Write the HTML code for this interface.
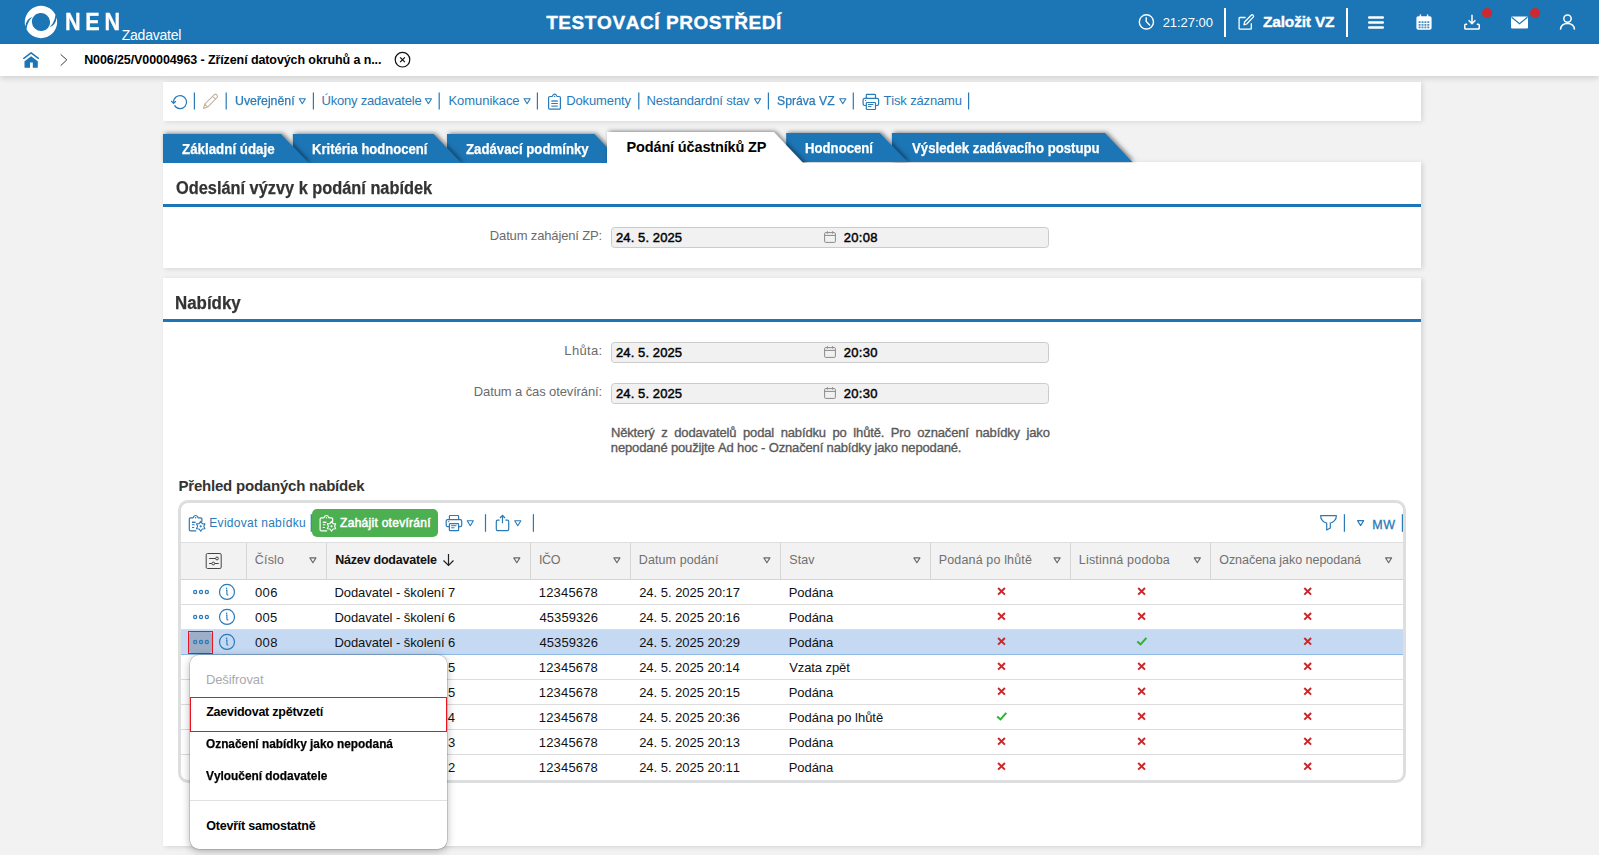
<!DOCTYPE html><html lang="cs"><head><meta charset="utf-8"><title>NEN - Zadavatel</title><style>

html,body{margin:0;padding:0}
body{font-kerning:none;width:1599px;height:855px;overflow:hidden;background:#f2f2f2;font-family:"Liberation Sans", sans-serif;position:relative}
.a{position:absolute}
.t{position:absolute;white-space:nowrap;line-height:20px;height:20px}
svg{position:absolute;overflow:visible}

</style></head><body>
<div class="a" style="left:0;top:0;width:1599px;height:44px;background:#1c75b4"></div>
<svg style="left:18px;top:0px" width="50" height="44" viewBox="18 0 50 44"><path d="M25.45 26.55A16.2 16.2 0 0 1 55.5 14.8Q54.6 24 47.6 28.6A9.3 9.3 0 1 0 33.5 16.5Q25.7 18.7 25.45 26.55Z" fill="#fff"/><path d="M25.45 26.55A16.2 16.2 0 0 1 55.5 14.8Q54.6 24 47.6 28.6A9.3 9.3 0 1 0 33.5 16.5Q25.7 18.7 25.45 26.55Z" fill="#fff" transform="rotate(180 41 22)"/></svg>
<span class="t" id="t2" style="left:64.96px;top:12.00px;font-size:23.5px;font-weight:700;color:#fff;-webkit-text-stroke:.3px #fff;transform:scaleX(0.920);transform-origin:0 0;letter-spacing:5.139px;">NEN</span>
<span class="t" id="t3" style="left:121.66px;top:25.00px;font-size:14px;font-weight:400;color:#fff;letter-spacing:-0.213px;">Zadavatel</span>
<span class="t" id="t4" style="left:546.19px;top:13.00px;font-size:19px;font-weight:700;color:#fff;letter-spacing:0.574px;-webkit-text-stroke:.35px #fff;">TESTOVACÍ PROSTŘEDÍ</span>
<svg style="left:1138px;top:13px" width="17" height="18" viewBox="0 -0.5 17 18"><circle cx="8.4" cy="8.4" r="7.1" fill="none" stroke="#fff" stroke-width="1.4"/><path d="M8.2 4.2V8L11.6 11.4" fill="none" stroke="#fff" stroke-width="1.4" stroke-linecap="round"/></svg>
<span class="t" id="t6" style="left:1162.65px;top:13.00px;font-size:13px;font-weight:400;color:#fff;letter-spacing:-0.049px;">21:27:00</span>
<div class="a" style="left:1224px;top:8px;width:2px;height:29px;background:#fff"></div>
<svg style="left:1238px;top:13px" width="17" height="18" viewBox="0 -0.6 17 18"><path d="M7.6 3.9H1.7A0.6 0.6 0 0 0 1.1 4.5V15A0.6 0.6 0 0 0 1.7 15.6H12.7A0.6 0.6 0 0 0 13.3 15V9.6" fill="none" stroke="#fff" stroke-width="1.3"/><path d="M6 11.2L6.6 8.4L13.2 1.6A1.35 1.35 0 0 1 15.2 3.5L8.7 10.4Z" fill="none" stroke="#fff" stroke-width="1.3" stroke-linejoin="round"/></svg>
<span class="t" id="t9" style="left:1263.04px;top:12.00px;font-size:15.5px;font-weight:700;color:#fff;letter-spacing:-0.187px;-webkit-text-stroke:.35px #fff;">Založit VZ</span>
<div class="a" style="left:1346px;top:8px;width:2px;height:29px;background:#fff"></div>
<svg style="left:1368px;top:15px" width="16" height="14" viewBox="0 0 16 14"><path d="M1.2 2.4H14.8M1.2 7.4H14.8M1.2 12.4H14.8" stroke="#fff" stroke-width="2.5" stroke-linecap="round"/></svg>
<svg style="left:1416px;top:14px" width="16" height="16" viewBox="0 0 16 16"><rect x="0.4" y="2.2" width="15.2" height="13.6" rx="1.8" fill="#fff"/><path d="M4.4 0.4V3.4M11.6 0.4V3.4" stroke="#fff" stroke-width="1.5"/><path d="M2.6 8.2H13.4M2.6 10.8H13.4M2.6 13.3H13.4" stroke="#1c75b4" stroke-width="1.7" stroke-dasharray="2 0.9" opacity=".8"/></svg>
<svg style="left:1464px;top:14px" width="16" height="16" viewBox="0 0 16 16"><path d="M8 0.8V9.5M4.6 6.3L8 9.7L11.4 6.3" fill="none" stroke="#fff" stroke-width="1.5"/><path d="M3.2 10.3H1.6A0.8 0.8 0 0 0 0.8 11.1V14.2A0.8 0.8 0 0 0 1.6 15H14.4A0.8 0.8 0 0 0 15.2 14.2V11.1A0.8 0.8 0 0 0 14.4 10.3H12.8" fill="none" stroke="#fff" stroke-width="1.5"/></svg>
<div class="a" style="left:1482px;top:8px;width:10px;height:10px;border-radius:5px;background:#cc2a2e"></div>
<svg style="left:1511px;top:16px" width="17" height="13" viewBox="0 -0.5 17 13"><rect x="0" y="0" width="17" height="12" rx="1.2" fill="#fff"/><path d="M0.6 0.8L8.5 7.2L16.4 0.8" fill="none" stroke="#1c75b4" stroke-width="1.2"/></svg>
<div class="a" style="left:1530px;top:8px;width:10px;height:10px;border-radius:5px;background:#cc2a2e"></div>
<svg style="left:1559px;top:14px" width="17" height="16" viewBox="-0.5 0 17 16"><circle cx="8" cy="4.6" r="3.7" fill="none" stroke="#fff" stroke-width="1.5"/><path d="M1 15.6C1.3 11 4.3 9.4 8 9.4S14.7 11 15 15.6" fill="none" stroke="#fff" stroke-width="1.5"/></svg>
<div class="a" style="left:0;top:44px;width:1599px;height:32px;background:#fff;box-shadow:0 2px 6px rgba(0,0,0,.15)"></div>
<svg style="left:23px;top:52px" width="16" height="16" viewBox="0 0 16 16"><path d="M0.8 6.3L8.1 0.8L15.4 6.3" fill="none" stroke="#1c75b4" stroke-width="1.5" stroke-linecap="round" stroke-linejoin="round"/><path d="M1.5 9.3L8.1 4.2L14.8 9.3V15.2Q14.8 15.8 14.2 15.8H9.8V10.5H7V15.8H2.1Q1.5 15.8 1.5 15.2Z" fill="#1c75b4"/></svg>
<svg style="left:60px;top:54px" width="8" height="12" viewBox="0 0 8 12"><path d="M0.7 0.4L6.8 5.9L0.7 11.6" fill="none" stroke="#3c3c4a" stroke-width="1"/></svg>
<span class="t" id="t21" style="left:84.16px;top:50.00px;font-size:12.5px;font-weight:700;color:#000;letter-spacing:-0.100px;">N006/25/V00004963 - Zřízení datových okruhů a n...</span>
<svg style="left:394px;top:51px" width="17" height="17" viewBox="-0.5 -0.7 17 17"><circle cx="8" cy="8" r="7.3" fill="none" stroke="#111" stroke-width="1.2"/><path d="M5.6 5.6L10.4 10.4M10.4 5.6L5.6 10.4" stroke="#111" stroke-width="1.2"/></svg>
<div class="a" style="left:163px;top:82px;width:1258px;height:39px;background:#fff;box-shadow:2px 1px 5px rgba(0,0,0,.11)"></div>
<svg style="left:171px;top:94px" width="16" height="15" viewBox="0 0 16 15"><path d="M2.6 8.6A6.5 6.5 0 1 1 3.5 11.4" fill="none" stroke="#2a7ab8" stroke-width="1.2"/><path d="M0.3 6.9L2.5 9.4L4.9 7.3" fill="none" stroke="#2a7ab8" stroke-width="1.3"/></svg>
<svg style="left:193px;top:92px" width="3" height="18" viewBox="-0.8 -0.5 3 18"><rect width="1.2" height="17.0" fill="#2a7ab8"/></svg>
<svg style="left:202px;top:93px" width="18" height="17" viewBox="-0.5 -0.5 18 17"><path d="M1 15L2.2 10.6L11.6 1.4A1.9 1.9 0 0 1 14.4 4.2L5.2 13.6Z M2.2 10.6L5.2 13.6 M10.2 2.8L13 5.6" fill="none" stroke="#c4b3a2" stroke-width="1.1" stroke-linejoin="round"/></svg>
<svg style="left:225px;top:92px" width="2" height="18" viewBox="-0.6 -0.5 2 18"><rect width="1.2" height="17.0" fill="#2a7ab8"/></svg>
<span class="t" id="t28" style="left:234.95px;top:91.00px;font-size:13px;font-weight:400;color:#2a7ab8;transform:scaleX(0.9482);transform-origin:0 0;-webkit-text-stroke:.25px #2a7ab8;">Uveřejnění</span>
<svg style="left:298px;top:98px" width="8" height="7" viewBox="-0.7 -0.2 8 7"><path d="M0.55 0.55H6.65L3.6 5.5Z" fill="none" stroke="#2a7ab8" stroke-width="1.1" stroke-linejoin="round"/></svg>
<svg style="left:312px;top:92px" width="3" height="18" viewBox="-0.8 -0.5 3 18"><rect width="1.2" height="17.0" fill="#2a7ab8"/></svg>
<span class="t" id="t31" style="left:321.50px;top:91.00px;font-size:13px;font-weight:400;color:#2a7ab8;letter-spacing:-0.211px;">Úkony zadavatele</span>
<svg style="left:424px;top:98px" width="9" height="7" viewBox="-0.8 -0.2 9 7"><path d="M0.55 0.55H6.65L3.6 5.5Z" fill="none" stroke="#2a7ab8" stroke-width="1.1" stroke-linejoin="round"/></svg>
<svg style="left:438px;top:92px" width="2" height="18" viewBox="-0.6 -0.5 2 18"><rect width="1.2" height="17.0" fill="#2a7ab8"/></svg>
<span class="t" id="t34" style="left:448.43px;top:91.00px;font-size:13px;font-weight:400;color:#2a7ab8;letter-spacing:-0.044px;">Komunikace</span>
<svg style="left:523px;top:98px" width="8" height="7" viewBox="-0.5 -0.2 8 7"><path d="M0.55 0.55H6.65L3.6 5.5Z" fill="none" stroke="#2a7ab8" stroke-width="1.1" stroke-linejoin="round"/></svg>
<svg style="left:536px;top:92px" width="2" height="18" viewBox="-0.8 -0.5 2 18"><rect width="1.2" height="17.0" fill="#2a7ab8"/></svg>
<svg style="left:548px;top:93px" width="13" height="17" viewBox="0 0 13 17"><path d="M4 3.5H1.8A1.2 1.2 0 0 0 0.6 4.7V15A1.2 1.2 0 0 0 1.8 16.2H11.2A1.2 1.2 0 0 0 12.4 15V4.7A1.2 1.2 0 0 0 11.2 3.5H9.3M4 3.5C5 3.5 4.4 1.1 6.65 1.1C8.9 1.1 8.3 3.5 9.3 3.5" fill="none" stroke="#2a7ab8" stroke-width="1.2"/><circle cx="6.6" cy="3.4" r="0.7" fill="#2a7ab8"/><path d="M3.3 8H9.8M3.3 13.1H9.8" stroke="#2a7ab8" stroke-width="1.4" opacity=".85"/><path d="M3.3 10.5H9.8" stroke="#2a7ab8" stroke-width="1"/></svg>
<span class="t" id="t38" style="left:566.13px;top:91.00px;font-size:13px;font-weight:400;color:#2a7ab8;letter-spacing:-0.107px;">Dokumenty</span>
<svg style="left:638px;top:92px" width="2" height="18" viewBox="-0.2 -0.5 2 18"><rect width="1.2" height="17.0" fill="#2a7ab8"/></svg>
<span class="t" id="t40" style="left:646.43px;top:91.00px;font-size:13px;font-weight:400;color:#2a7ab8;letter-spacing:-0.150px;">Nestandardní stav</span>
<svg style="left:754px;top:98px" width="8" height="7" viewBox="0 -0.2 8 7"><path d="M0.55 0.55H6.65L3.6 5.5Z" fill="none" stroke="#2a7ab8" stroke-width="1.1" stroke-linejoin="round"/></svg>
<svg style="left:767px;top:92px" width="2" height="18" viewBox="-0.8 -0.5 2 18"><rect width="1.2" height="17.0" fill="#2a7ab8"/></svg>
<span class="t" id="t43" style="left:777.45px;top:91.00px;font-size:13px;font-weight:400;color:#2a7ab8;transform:scaleX(0.9385);transform-origin:0 0;-webkit-text-stroke:.25px #2a7ab8;">Správa VZ</span>
<svg style="left:839px;top:98px" width="8" height="7" viewBox="-0.2 -0.2 8 7"><path d="M0.55 0.55H6.65L3.6 5.5Z" fill="none" stroke="#2a7ab8" stroke-width="1.1" stroke-linejoin="round"/></svg>
<svg style="left:852px;top:92px" width="2" height="18" viewBox="-0.7 -0.5 2 18"><rect width="1.2" height="17.0" fill="#2a7ab8"/></svg>
<svg style="left:862px;top:93px" width="18" height="18" viewBox="0 0 18 18"><path d="M4.3 5.4V2.1A0.8 0.8 0 0 1 5.1 1.3H12.7A0.8 0.8 0 0 1 13.5 2.1V5.4" fill="none" stroke="#2a7ab8" stroke-width="1.2"/><path d="M4.3 12.5H2.5A1.4 1.4 0 0 1 1.1 11.1V6.8A1.4 1.4 0 0 1 2.5 5.4H15.2A1.4 1.4 0 0 1 16.6 6.8V11.1A1.4 1.4 0 0 1 15.2 12.5H13.5" fill="none" stroke="#2a7ab8" stroke-width="1.2"/><rect x="4.3" y="9.5" width="9.2" height="7" rx="0.7" fill="none" stroke="#2a7ab8" stroke-width="1.2"/><path d="M6 11.5H11.4M6 13.6H9.5M3 7.5H4.2" stroke="#2a7ab8" stroke-width="1"/></svg>
<span class="t" id="t47" style="left:883.51px;top:91.00px;font-size:13px;font-weight:400;color:#2a7ab8;letter-spacing:-0.158px;">Tisk záznamu</span>
<svg style="left:968px;top:92px" width="2" height="18" viewBox="0 -0.5 2 18"><rect width="1.2" height="17.0" fill="#2a7ab8"/></svg>
<div class="a" style="left:163px;top:162px;width:1258px;height:106px;background:#fff;box-shadow:2px 1px 5px rgba(0,0,0,.13)"></div>
<svg style="left:0px;top:120px" width="1599" height="50" viewBox="0 120 1599 50"><defs><filter id="ts" x="-5%" y="-30%" width="110%" height="160%"><feDropShadow dx="1.8" dy="-0.6" stdDeviation="1.9" flood-color="#000" flood-opacity=".5"/></filter><clipPath id="tc"><rect x="0" y="120" width="1599" height="43"/></clipPath></defs><g clip-path="url(#tc)"><polygon points="891.9,133 1105,133 1132.5,162 891.9,162" fill="#1c75b4" filter="url(#ts)"/><polygon points="786.2,133 880,133 907.5,162 786.2,162" fill="#1c75b4" filter="url(#ts)"/><polygon points="447,134 594.5,134 622,163 447,163" fill="#1c75b4" filter="url(#ts)"/><polygon points="292.9,134 433.7,134 461.2,163 292.9,163" fill="#1c75b4" filter="url(#ts)"/><polygon points="163,134 281.1,134 308.6,163 163,163" fill="#1c75b4" filter="url(#ts)"/><polygon points="607,132 773.7,132 805.9,166 607,166" fill="#fff" filter="url(#ts)"/></g></svg>
<span class="t" id="t51" style="left:182.20px;top:139.00px;font-size:14px;font-weight:700;color:#fff;transform:scaleX(0.9528);transform-origin:0 0;-webkit-text-stroke:.25px #fff;">Základní údaje</span>
<span class="t" id="t52" style="left:312.12px;top:139.00px;font-size:14px;font-weight:700;color:#fff;transform:scaleX(0.9332);transform-origin:0 0;-webkit-text-stroke:.25px #fff;">Kritéria hodnocení</span>
<span class="t" id="t53" style="left:465.90px;top:139.00px;font-size:14px;font-weight:700;color:#fff;transform:scaleX(0.9441);transform-origin:0 0;-webkit-text-stroke:.25px #fff;">Zadávací podmínky</span>
<span class="t" id="t54" style="left:626.53px;top:137.00px;font-size:14.5px;font-weight:700;color:#000;letter-spacing:-0.147px;">Podání účastníků ZP</span>
<span class="t" id="t55" style="left:805.12px;top:138.00px;font-size:14px;font-weight:700;color:#fff;transform:scaleX(0.9405);transform-origin:0 0;-webkit-text-stroke:.25px #fff;">Hodnocení</span>
<span class="t" id="t56" style="left:911.71px;top:138.00px;font-size:14px;font-weight:700;color:#fff;transform:scaleX(0.9422);transform-origin:0 0;-webkit-text-stroke:.25px #fff;">Výsledek zadávacího postupu</span>
<div class="a" style="left:163px;top:204px;width:1258px;height:3px;background:#1c75b4"></div>
<span class="t" id="t58" style="left:175.83px;top:178.00px;font-size:18px;font-weight:700;color:#333;transform:scaleX(0.9080);transform-origin:0 0;-webkit-text-stroke:.25px #333;">Odeslání výzvy k podání nabídek</span>
<span class="t" id="t59" style="left:489.83px;top:226.00px;font-size:13px;font-weight:400;color:#6b6b6b;letter-spacing:-0.149px;">Datum zahájení ZP:</span>
<div class="a" style="left:611px;top:227px;width:436px;height:19px;background:#f1f1f1;border:1px solid #cbcbcb;border-radius:3.5px;box-sizing:content-box"></div>
<svg style="left:824px;top:231px" width="12" height="12" viewBox="0 0 12 12"><rect x="0.6" y="1.6" width="10.8" height="9.8" rx="1" fill="none" stroke="#8a8a8a" stroke-width="1"/><path d="M0.6 4.4H11.4M3.4 0.2V2.6M8.6 0.2V2.6" stroke="#8a8a8a" stroke-width="1"/></svg>
<span class="t" id="t62" style="left:616.05px;top:228.00px;font-size:13px;font-weight:400;color:#000;letter-spacing:0.094px;-webkit-text-stroke:.45px #000;">24. 5. 2025</span>
<span class="t" id="t63" style="left:843.75px;top:228.00px;font-size:13px;font-weight:400;color:#000;letter-spacing:0.322px;-webkit-text-stroke:.45px #000;">20:08</span>
<div class="a" style="left:163px;top:278px;width:1258px;height:568px;background:#fff;box-shadow:2px 1px 5px rgba(0,0,0,.13)"></div>
<div class="a" style="left:163px;top:319px;width:1258px;height:3px;background:#1c75b4"></div>
<span class="t" id="t66" style="left:174.67px;top:293.00px;font-size:18px;font-weight:700;color:#333;transform:scaleX(0.9386);transform-origin:0 0;-webkit-text-stroke:.25px #333;">Nabídky</span>
<span class="t" id="t67" style="left:564.33px;top:341.00px;font-size:13px;font-weight:400;color:#6b6b6b;letter-spacing:0.342px;">Lhůta:</span>
<div class="a" style="left:611px;top:342px;width:436px;height:19px;background:#f1f1f1;border:1px solid #cbcbcb;border-radius:3.5px;box-sizing:content-box"></div>
<svg style="left:824px;top:346px" width="12" height="12" viewBox="0 0 12 12"><rect x="0.6" y="1.6" width="10.8" height="9.8" rx="1" fill="none" stroke="#8a8a8a" stroke-width="1"/><path d="M0.6 4.4H11.4M3.4 0.2V2.6M8.6 0.2V2.6" stroke="#8a8a8a" stroke-width="1"/></svg>
<span class="t" id="t70" style="left:616.05px;top:343.00px;font-size:13px;font-weight:400;color:#000;letter-spacing:0.094px;-webkit-text-stroke:.45px #000;">24. 5. 2025</span>
<span class="t" id="t71" style="left:843.75px;top:343.00px;font-size:13px;font-weight:400;color:#000;letter-spacing:0.307px;-webkit-text-stroke:.45px #000;">20:30</span>
<span class="t" id="t72" style="left:473.83px;top:382.00px;font-size:13px;font-weight:400;color:#6b6b6b;letter-spacing:-0.116px;">Datum a čas otevírání:</span>
<div class="a" style="left:611px;top:383px;width:436px;height:19px;background:#f1f1f1;border:1px solid #cbcbcb;border-radius:3.5px;box-sizing:content-box"></div>
<svg style="left:824px;top:387px" width="12" height="12" viewBox="0 0 12 12"><rect x="0.6" y="1.6" width="10.8" height="9.8" rx="1" fill="none" stroke="#8a8a8a" stroke-width="1"/><path d="M0.6 4.4H11.4M3.4 0.2V2.6M8.6 0.2V2.6" stroke="#8a8a8a" stroke-width="1"/></svg>
<span class="t" id="t75" style="left:616.05px;top:384.00px;font-size:13px;font-weight:400;color:#000;letter-spacing:0.094px;-webkit-text-stroke:.45px #000;">24. 5. 2025</span>
<span class="t" id="t76" style="left:843.75px;top:384.00px;font-size:13px;font-weight:400;color:#000;letter-spacing:0.307px;-webkit-text-stroke:.45px #000;">20:30</span>
<span class="t" id="t77" style="left:610.93px;top:423.00px;font-size:13px;font-weight:400;color:#5a5a5a;-webkit-text-stroke:.35px #5a5a5a;letter-spacing:-0.150px;word-spacing:3.165px;">Některý z dodavatelů podal nabídku po lhůtě. Pro označení nabídky jako</span>
<span class="t" id="t78" style="left:610.84px;top:438.00px;font-size:13px;font-weight:400;color:#5a5a5a;-webkit-text-stroke:.35px #5a5a5a;letter-spacing:-0.150px;">nepodané použijte Ad hoc - Označení nabídky jako nepodané.</span>
<span class="t" id="t79" style="left:178.50px;top:476.00px;font-size:15px;font-weight:700;color:#333;letter-spacing:-0.213px;">Přehled podaných nabídek</span>
<div class="a" style="left:178px;top:500px;width:1222px;height:277px;border:3px solid #dcdee0;border-radius:10px;background:#fff"></div>
<svg style="left:188px;top:514px" width="18" height="18" viewBox="-0.7 -0.9 18 18"><path d="M4.1 3H1.8A1.2 1.2 0 0 0 0.6 4.2V14.8A1.2 1.2 0 0 0 1.8 16H7.1M9.7 3H12A1.2 1.2 0 0 1 13.2 4.2V6.4M4.1 3C5.1 3 4.5 0.6 6.9 0.6C9.3 0.6 8.7 3 9.7 3" fill="none" stroke="#2a7ab8" stroke-width="1.2" stroke-linecap="round"/><circle cx="6.9" cy="2.9" r="0.7" fill="#2a7ab8"/><path d="M3.3 7.4H6.9" stroke="#2a7ab8" stroke-width="1.4"/><path d="M3.3 9.9H5.9M3.3 12.6H5.5" stroke="#2a7ab8" stroke-width="1.1"/><path d="M12.0 6.5L13.6 8.7L16.2 9.0L15.1 11.4L16.2 13.8L13.6 14.1L12.0 16.3L10.5 14.1L7.8 13.8L8.9 11.4L7.8 8.9L10.4 8.7Z" fill="#fff" stroke="#2a7ab8" stroke-width="1.1" stroke-linejoin="round"/><circle cx="12" cy="11.4" r="1.1" fill="#2a7ab8"/></svg>
<span class="t" id="t82" style="left:209.32px;top:513.00px;font-size:12px;font-weight:400;color:#2a7ab8;letter-spacing:0.281px;">Evidovat nabídku</span>
<svg style="left:310px;top:514px" width="2" height="18" viewBox="-0.7 -0.2 2 18"><rect width="1.2" height="17.6" fill="#2a7ab8"/></svg>
<div class="a" style="left:312px;top:509.3px;width:126px;height:27.4px;background:#4caf50;border-radius:5px"></div>
<svg style="left:319px;top:514px" width="18" height="18" viewBox="-0.5 -0.9 18 18"><path d="M4.1 3H1.8A1.2 1.2 0 0 0 0.6 4.2V14.8A1.2 1.2 0 0 0 1.8 16H7.1M9.7 3H12A1.2 1.2 0 0 1 13.2 4.2V6.4M4.1 3C5.1 3 4.5 0.6 6.9 0.6C9.3 0.6 8.7 3 9.7 3" fill="none" stroke="#fff" stroke-width="1.2" stroke-linecap="round"/><circle cx="6.9" cy="2.9" r="0.7" fill="#fff"/><path d="M3.3 7.4H6.9" stroke="#fff" stroke-width="1.4"/><path d="M3.3 9.9H5.9M3.3 12.6H5.5" stroke="#fff" stroke-width="1.1"/><path d="M12.0 6.5L13.6 8.7L16.2 9.0L15.1 11.4L16.2 13.8L13.6 14.1L12.0 16.3L10.5 14.1L7.8 13.8L8.9 11.4L7.8 8.9L10.4 8.7Z" fill="#4caf50" stroke="#fff" stroke-width="1.1" stroke-linejoin="round"/><circle cx="12" cy="11.4" r="1.1" fill="#fff"/></svg>
<span class="t" id="t86" style="left:340.12px;top:513.00px;font-size:12px;font-weight:400;color:#fff;letter-spacing:0.275px;-webkit-text-stroke:.5px #fff;">Zahájit otevírání</span>
<svg style="left:445px;top:514px" width="19" height="19" viewBox="-0.1 -0.2 19 19"><path d="M4.3 5.4V2.1A0.8 0.8 0 0 1 5.1 1.3H12.7A0.8 0.8 0 0 1 13.5 2.1V5.4" fill="none" stroke="#2a7ab8" stroke-width="1.2"/><path d="M4.3 12.5H2.5A1.4 1.4 0 0 1 1.1 11.1V6.8A1.4 1.4 0 0 1 2.5 5.4H15.2A1.4 1.4 0 0 1 16.6 6.8V11.1A1.4 1.4 0 0 1 15.2 12.5H13.5" fill="none" stroke="#2a7ab8" stroke-width="1.2"/><rect x="4.3" y="9.5" width="9.2" height="7" rx="0.7" fill="none" stroke="#2a7ab8" stroke-width="1.2"/><path d="M6 11.5H11.4M6 13.6H9.5M3 7.5H4.2" stroke="#2a7ab8" stroke-width="1"/></svg>
<svg style="left:466px;top:520px" width="8" height="7" viewBox="-0.7 -0.2 8 7"><path d="M0.55 0.55H6.65L3.6 5.5Z" fill="none" stroke="#2a7ab8" stroke-width="1.1" stroke-linejoin="round"/></svg>
<svg style="left:484px;top:514px" width="3" height="18" viewBox="-0.9 -0.2 3 18"><rect width="1.2" height="17.6" fill="#2a7ab8"/></svg>
<svg style="left:495px;top:514px" width="15" height="18" viewBox="0 0 15 18"><path d="M4.6 6.2H2.6A1.3 1.3 0 0 0 1.3 7.5V15.3A1.3 1.3 0 0 0 2.6 16.6H12.4A1.3 1.3 0 0 0 13.7 15.3V7.5A1.3 1.3 0 0 0 12.4 6.2H10.4" fill="none" stroke="#2a7ab8" stroke-width="1.2"/><path d="M7.5 9.2V1.4M5 4L7.5 1.3L10 4" fill="none" stroke="#2a7ab8" stroke-width="1.2"/></svg>
<svg style="left:514px;top:520px" width="8" height="7" viewBox="-0.2 -0.2 8 7"><path d="M0.55 0.55H6.65L3.6 5.5Z" fill="none" stroke="#2a7ab8" stroke-width="1.1" stroke-linejoin="round"/></svg>
<svg style="left:532px;top:514px" width="2" height="18" viewBox="-0.8 -0.2 2 18"><rect width="1.2" height="17.6" fill="#2a7ab8"/></svg>
<svg style="left:1320px;top:515px" width="17" height="16" viewBox="0 0 17 16"><path d="M0.6 0.7H16.4C16.4 4.6 13.4 7.5 10.3 8V12.9L6.7 14.9V8C3.6 7.5 0.6 4.6 0.6 0.7Z" fill="none" stroke="#2a7ab8" stroke-width="1.2" stroke-linejoin="round"/></svg>
<svg style="left:1343px;top:514px" width="2" height="18" viewBox="-0.8 -0.2 2 18"><rect width="1.2" height="17.6" fill="#2a7ab8"/></svg>
<svg style="left:1357px;top:520px" width="8" height="7" viewBox="0 -0.1 8 7"><path d="M0.55 0.55H6.65L3.6 5.5Z" fill="none" stroke="#2a7ab8" stroke-width="1.1" stroke-linejoin="round"/></svg>
<span class="t" id="t96" style="left:1372.27px;top:515.00px;font-size:12.5px;font-weight:400;color:#2a7ab8;letter-spacing:0.657px;-webkit-text-stroke:.3px #2a7ab8;">MW</span>
<svg style="left:1401px;top:514px" width="2" height="18" viewBox="-0.8 -0.2 2 18"><rect width="1.2" height="17.6" fill="#2a7ab8"/></svg>
<div class="a" style="left:181px;top:542px;width:1222px;height:38px;background:#f2f2f2;border-top:1px solid #dedede;border-bottom:1px solid #d4d4d4;box-sizing:border-box"></div>
<div class="a" style="left:246px;top:543px;width:1px;height:36px;background:#d6d6d6"></div>
<div class="a" style="left:326px;top:543px;width:1px;height:36px;background:#d6d6d6"></div>
<div class="a" style="left:530px;top:543px;width:1px;height:36px;background:#d6d6d6"></div>
<div class="a" style="left:630px;top:543px;width:1px;height:36px;background:#d6d6d6"></div>
<div class="a" style="left:780px;top:543px;width:1px;height:36px;background:#d6d6d6"></div>
<div class="a" style="left:930px;top:543px;width:1px;height:36px;background:#d6d6d6"></div>
<div class="a" style="left:1070px;top:543px;width:1px;height:36px;background:#d6d6d6"></div>
<div class="a" style="left:1210px;top:543px;width:1px;height:36px;background:#d6d6d6"></div>
<svg style="left:205px;top:553px" width="17" height="16" viewBox="-0.7 0 17 16"><rect x="0.5" y="0.5" width="15" height="15" rx="1.3" fill="none" stroke="#444" stroke-width="1"/><path d="M3.4 5.5H9.8M3.4 10.5H6.1M9.1 10.5H13" stroke="#444" stroke-width="1"/><circle cx="11.3" cy="5.5" r="1.4" fill="none" stroke="#444" stroke-width="1"/><circle cx="7.6" cy="10.5" r="1.4" fill="none" stroke="#444" stroke-width="1"/></svg>
<span class="t" id="t108" style="left:254.87px;top:550.00px;font-size:12.5px;font-weight:400;color:#707070;letter-spacing:0.170px;">Číslo</span>
<svg style="left:309px;top:557px" width="8" height="7" viewBox="-0.3 -0.3 8 7"><path d="M0.55 0.55H6.65L3.6 5.5Z" fill="none" stroke="#686868" stroke-width="1.1" stroke-linejoin="round"/></svg>
<span class="t" id="t110" style="left:538.95px;top:550.00px;font-size:12.5px;font-weight:400;color:#707070;letter-spacing:-0.286px;">IČO</span>
<svg style="left:613px;top:557px" width="8" height="7" viewBox="-0.3 -0.3 8 7"><path d="M0.55 0.55H6.65L3.6 5.5Z" fill="none" stroke="#686868" stroke-width="1.1" stroke-linejoin="round"/></svg>
<span class="t" id="t112" style="left:638.77px;top:550.00px;font-size:12.5px;font-weight:400;color:#707070;letter-spacing:0.097px;">Datum podání</span>
<svg style="left:763px;top:557px" width="8" height="7" viewBox="-0.3 -0.3 8 7"><path d="M0.55 0.55H6.65L3.6 5.5Z" fill="none" stroke="#686868" stroke-width="1.1" stroke-linejoin="round"/></svg>
<span class="t" id="t114" style="left:789.23px;top:550.00px;font-size:12.5px;font-weight:400;color:#707070;letter-spacing:0.099px;">Stav</span>
<svg style="left:913px;top:557px" width="8" height="7" viewBox="-0.3 -0.3 8 7"><path d="M0.55 0.55H6.65L3.6 5.5Z" fill="none" stroke="#686868" stroke-width="1.1" stroke-linejoin="round"/></svg>
<span class="t" id="t116" style="left:938.77px;top:550.00px;font-size:12.5px;font-weight:400;color:#707070;letter-spacing:0.145px;">Podaná po lhůtě</span>
<svg style="left:1053px;top:557px" width="8" height="7" viewBox="-0.5 -0.3 8 7"><path d="M0.55 0.55H6.65L3.6 5.5Z" fill="none" stroke="#686868" stroke-width="1.1" stroke-linejoin="round"/></svg>
<span class="t" id="t118" style="left:1078.77px;top:550.00px;font-size:12.5px;font-weight:400;color:#707070;letter-spacing:0.197px;">Listinná podoba</span>
<svg style="left:1193px;top:557px" width="8" height="7" viewBox="-0.7 -0.3 8 7"><path d="M0.55 0.55H6.65L3.6 5.5Z" fill="none" stroke="#686868" stroke-width="1.1" stroke-linejoin="round"/></svg>
<span class="t" id="t120" style="left:1219.21px;top:550.00px;font-size:12.5px;font-weight:400;color:#707070;letter-spacing:-0.032px;">Označena jako nepodaná</span>
<svg style="left:1385px;top:557px" width="8" height="7" viewBox="0 -0.3 8 7"><path d="M0.55 0.55H6.65L3.6 5.5Z" fill="none" stroke="#686868" stroke-width="1.1" stroke-linejoin="round"/></svg>
<span class="t" id="t122" style="left:335.16px;top:550.00px;font-size:12.5px;font-weight:700;color:#111;letter-spacing:-0.210px;">Název dodavatele</span>
<svg style="left:513px;top:557px" width="8" height="7" viewBox="-0.2 -0.3 8 7"><path d="M0.55 0.55H6.65L3.6 5.5Z" fill="none" stroke="#686868" stroke-width="1.1" stroke-linejoin="round"/></svg>
<svg style="left:442px;top:553px" width="13" height="14" viewBox="-0.5 -0.5 13 14"><path d="M6 0.5V12M1 7L6 12L11 7" fill="none" stroke="#222" stroke-width="1.2"/></svg>
<div class="a" style="left:181px;top:604px;width:1222px;height:1px;background:#dcdcdc"></div>
<svg style="left:192px;top:589px" width="18" height="6" viewBox="-0.5 0 18 6"><circle cx="2.65" cy="3" r="1.55" fill="none" stroke="#2a7ab8" stroke-width="1.25"/><circle cx="8.5" cy="3" r="1.55" fill="none" stroke="#2a7ab8" stroke-width="1.25"/><circle cx="14.35" cy="3" r="1.55" fill="none" stroke="#2a7ab8" stroke-width="1.25"/></svg>
<svg style="left:218px;top:583px" width="18" height="18" viewBox="-0.7 -0.4 18 18"><circle cx="8.3" cy="8.5" r="7.5" fill="none" stroke="#2a7ab8" stroke-width="1.2"/><path d="M7.3 6.7H8.2V10.6Q8.2 11.7 9.6 11.5" fill="none" stroke="#2a7ab8" stroke-width="1.1"/><circle cx="7.9" cy="4.8" r="0.8" fill="#2a7ab8"/></svg>
<span class="t" id="t128" style="left:254.99px;top:583.00px;font-size:13px;font-weight:400;color:#111;letter-spacing:0.345px;">006</span>
<span class="t" id="t129" style="left:334.43px;top:583.00px;font-size:13px;font-weight:400;color:#111;letter-spacing:-0.060px;">Dodavatel - školení 7</span>
<span class="t" id="t130" style="left:538.81px;top:583.00px;font-size:13px;font-weight:400;color:#111;letter-spacing:0.174px;">12345678</span>
<span class="t" id="t131" style="left:639.15px;top:583.00px;font-size:13px;font-weight:400;color:#111;letter-spacing:-0.018px;">24. 5. 2025 20:17</span>
<span class="t" id="t132" style="left:788.73px;top:583.00px;font-size:13px;font-weight:400;color:#111;letter-spacing:-0.071px;">Podána</span>
<svg style="left:997px;top:586px" width="9" height="10" viewBox="0 -0.8 9 10"><path d="M1.1 1.2L7.9 7.8M7.9 1.2L1.1 7.8" stroke="#cc2629" stroke-width="2"/></svg>
<svg style="left:1137px;top:586px" width="10" height="10" viewBox="-0.1 -0.8 10 10"><path d="M1.1 1.2L7.9 7.8M7.9 1.2L1.1 7.8" stroke="#cc2629" stroke-width="2"/></svg>
<svg style="left:1303px;top:586px" width="10" height="10" viewBox="-0.2 -0.8 10 10"><path d="M1.1 1.2L7.9 7.8M7.9 1.2L1.1 7.8" stroke="#cc2629" stroke-width="2"/></svg>
<div class="a" style="left:181px;top:629px;width:1222px;height:1px;background:#dcdcdc"></div>
<svg style="left:192px;top:614px" width="18" height="6" viewBox="-0.5 0 18 6"><circle cx="2.65" cy="3" r="1.55" fill="none" stroke="#2a7ab8" stroke-width="1.25"/><circle cx="8.5" cy="3" r="1.55" fill="none" stroke="#2a7ab8" stroke-width="1.25"/><circle cx="14.35" cy="3" r="1.55" fill="none" stroke="#2a7ab8" stroke-width="1.25"/></svg>
<svg style="left:218px;top:608px" width="18" height="18" viewBox="-0.7 -0.4 18 18"><circle cx="8.3" cy="8.5" r="7.5" fill="none" stroke="#2a7ab8" stroke-width="1.2"/><path d="M7.3 6.7H8.2V10.6Q8.2 11.7 9.6 11.5" fill="none" stroke="#2a7ab8" stroke-width="1.1"/><circle cx="7.9" cy="4.8" r="0.8" fill="#2a7ab8"/></svg>
<span class="t" id="t139" style="left:254.99px;top:608.00px;font-size:13px;font-weight:400;color:#111;letter-spacing:0.332px;">005</span>
<span class="t" id="t140" style="left:334.43px;top:608.00px;font-size:13px;font-weight:400;color:#111;letter-spacing:-0.064px;">Dodavatel - školení 6</span>
<span class="t" id="t141" style="left:539.50px;top:608.00px;font-size:13px;font-weight:400;color:#111;letter-spacing:0.076px;">45359326</span>
<span class="t" id="t142" style="left:639.15px;top:608.00px;font-size:13px;font-weight:400;color:#111;letter-spacing:-0.023px;">24. 5. 2025 20:16</span>
<span class="t" id="t143" style="left:788.73px;top:608.00px;font-size:13px;font-weight:400;color:#111;letter-spacing:-0.071px;">Podána</span>
<svg style="left:997px;top:611px" width="9" height="10" viewBox="0 -0.8 9 10"><path d="M1.1 1.2L7.9 7.8M7.9 1.2L1.1 7.8" stroke="#cc2629" stroke-width="2"/></svg>
<svg style="left:1137px;top:611px" width="10" height="10" viewBox="-0.1 -0.8 10 10"><path d="M1.1 1.2L7.9 7.8M7.9 1.2L1.1 7.8" stroke="#cc2629" stroke-width="2"/></svg>
<svg style="left:1303px;top:611px" width="10" height="10" viewBox="-0.2 -0.8 10 10"><path d="M1.1 1.2L7.9 7.8M7.9 1.2L1.1 7.8" stroke="#cc2629" stroke-width="2"/></svg>
<div class="a" style="left:181px;top:630px;width:1222px;height:24px;background:#c5d9f3"></div>
<div class="a" style="left:181px;top:654px;width:1222px;height:1px;background:#8fbbe9"></div>
<div class="a" style="left:188px;top:631px;width:23px;height:21px;background:#c5d9f3;border:1px solid #e8141f"><div style="width:23px;height:21px;border-radius:3px;background:#9dafc8"></div></div>
<svg style="left:192px;top:639px" width="18" height="6" viewBox="-0.5 0 18 6"><circle cx="2.65" cy="3" r="1.55" fill="none" stroke="#2a7ab8" stroke-width="1.25"/><circle cx="8.5" cy="3" r="1.55" fill="none" stroke="#2a7ab8" stroke-width="1.25"/><circle cx="14.35" cy="3" r="1.55" fill="none" stroke="#2a7ab8" stroke-width="1.25"/></svg>
<svg style="left:218px;top:633px" width="18" height="18" viewBox="-0.7 -0.4 18 18"><circle cx="8.3" cy="8.5" r="7.5" fill="none" stroke="#2a7ab8" stroke-width="1.2"/><path d="M7.3 6.7H8.2V10.6Q8.2 11.7 9.6 11.5" fill="none" stroke="#2a7ab8" stroke-width="1.1"/><circle cx="7.9" cy="4.8" r="0.8" fill="#2a7ab8"/></svg>
<span class="t" id="t152" style="left:254.99px;top:633.00px;font-size:13px;font-weight:400;color:#111;letter-spacing:0.341px;">008</span>
<span class="t" id="t153" style="left:334.43px;top:633.00px;font-size:13px;font-weight:400;color:#111;letter-spacing:-0.064px;">Dodavatel - školení 6</span>
<span class="t" id="t154" style="left:539.50px;top:633.00px;font-size:13px;font-weight:400;color:#111;letter-spacing:0.076px;">45359326</span>
<span class="t" id="t155" style="left:639.15px;top:633.00px;font-size:13px;font-weight:400;color:#111;letter-spacing:-0.021px;">24. 5. 2025 20:29</span>
<span class="t" id="t156" style="left:788.73px;top:633.00px;font-size:13px;font-weight:400;color:#111;letter-spacing:-0.071px;">Podána</span>
<svg style="left:997px;top:636px" width="9" height="10" viewBox="0 -0.8 9 10"><path d="M1.1 1.2L7.9 7.8M7.9 1.2L1.1 7.8" stroke="#cc2629" stroke-width="2"/></svg>
<svg style="left:1136px;top:636px" width="12" height="10" viewBox="-0.4 -0.8 12 10"><path d="M0.9 4.6L4.2 7.6L10 1" fill="none" stroke="#2db32f" stroke-width="2"/></svg>
<svg style="left:1303px;top:636px" width="10" height="10" viewBox="-0.2 -0.8 10 10"><path d="M1.1 1.2L7.9 7.8M7.9 1.2L1.1 7.8" stroke="#cc2629" stroke-width="2"/></svg>
<div class="a" style="left:181px;top:679px;width:1222px;height:1px;background:#dcdcdc"></div>
<svg style="left:192px;top:664px" width="18" height="6" viewBox="-0.5 0 18 6"><circle cx="2.65" cy="3" r="1.55" fill="none" stroke="#2a7ab8" stroke-width="1.25"/><circle cx="8.5" cy="3" r="1.55" fill="none" stroke="#2a7ab8" stroke-width="1.25"/><circle cx="14.35" cy="3" r="1.55" fill="none" stroke="#2a7ab8" stroke-width="1.25"/></svg>
<svg style="left:218px;top:658px" width="18" height="18" viewBox="-0.7 -0.4 18 18"><circle cx="8.3" cy="8.5" r="7.5" fill="none" stroke="#2a7ab8" stroke-width="1.2"/><path d="M7.3 6.7H8.2V10.6Q8.2 11.7 9.6 11.5" fill="none" stroke="#2a7ab8" stroke-width="1.1"/><circle cx="7.9" cy="4.8" r="0.8" fill="#2a7ab8"/></svg>
<span class="t" id="t163" style="left:254.99px;top:658.00px;font-size:13px;font-weight:400;color:#111;letter-spacing:0.386px;">007</span>
<span class="t" id="t164" style="left:334.43px;top:658.00px;font-size:13px;font-weight:400;color:#111;letter-spacing:-0.066px;">Dodavatel - školení 5</span>
<span class="t" id="t165" style="left:538.81px;top:658.00px;font-size:13px;font-weight:400;color:#111;letter-spacing:0.174px;">12345678</span>
<span class="t" id="t166" style="left:639.15px;top:658.00px;font-size:13px;font-weight:400;color:#111;letter-spacing:-0.035px;">24. 5. 2025 20:14</span>
<span class="t" id="t167" style="left:789.14px;top:658.00px;font-size:13px;font-weight:400;color:#111;letter-spacing:-0.075px;">Vzata zpět</span>
<svg style="left:997px;top:661px" width="9" height="10" viewBox="0 -0.8 9 10"><path d="M1.1 1.2L7.9 7.8M7.9 1.2L1.1 7.8" stroke="#cc2629" stroke-width="2"/></svg>
<svg style="left:1137px;top:661px" width="10" height="10" viewBox="-0.1 -0.8 10 10"><path d="M1.1 1.2L7.9 7.8M7.9 1.2L1.1 7.8" stroke="#cc2629" stroke-width="2"/></svg>
<svg style="left:1303px;top:661px" width="10" height="10" viewBox="-0.2 -0.8 10 10"><path d="M1.1 1.2L7.9 7.8M7.9 1.2L1.1 7.8" stroke="#cc2629" stroke-width="2"/></svg>
<div class="a" style="left:181px;top:704px;width:1222px;height:1px;background:#dcdcdc"></div>
<svg style="left:192px;top:689px" width="18" height="6" viewBox="-0.5 0 18 6"><circle cx="2.65" cy="3" r="1.55" fill="none" stroke="#2a7ab8" stroke-width="1.25"/><circle cx="8.5" cy="3" r="1.55" fill="none" stroke="#2a7ab8" stroke-width="1.25"/><circle cx="14.35" cy="3" r="1.55" fill="none" stroke="#2a7ab8" stroke-width="1.25"/></svg>
<svg style="left:218px;top:683px" width="18" height="18" viewBox="-0.7 -0.4 18 18"><circle cx="8.3" cy="8.5" r="7.5" fill="none" stroke="#2a7ab8" stroke-width="1.2"/><path d="M7.3 6.7H8.2V10.6Q8.2 11.7 9.6 11.5" fill="none" stroke="#2a7ab8" stroke-width="1.1"/><circle cx="7.9" cy="4.8" r="0.8" fill="#2a7ab8"/></svg>
<span class="t" id="t174" style="left:254.99px;top:683.00px;font-size:13px;font-weight:400;color:#111;letter-spacing:0.249px;">004</span>
<span class="t" id="t175" style="left:334.43px;top:683.00px;font-size:13px;font-weight:400;color:#111;letter-spacing:-0.066px;">Dodavatel - školení 5</span>
<span class="t" id="t176" style="left:538.81px;top:683.00px;font-size:13px;font-weight:400;color:#111;letter-spacing:0.174px;">12345678</span>
<span class="t" id="t177" style="left:639.15px;top:683.00px;font-size:13px;font-weight:400;color:#111;letter-spacing:-0.025px;">24. 5. 2025 20:15</span>
<span class="t" id="t178" style="left:788.73px;top:683.00px;font-size:13px;font-weight:400;color:#111;letter-spacing:-0.071px;">Podána</span>
<svg style="left:997px;top:686px" width="9" height="10" viewBox="0 -0.8 9 10"><path d="M1.1 1.2L7.9 7.8M7.9 1.2L1.1 7.8" stroke="#cc2629" stroke-width="2"/></svg>
<svg style="left:1137px;top:686px" width="10" height="10" viewBox="-0.1 -0.8 10 10"><path d="M1.1 1.2L7.9 7.8M7.9 1.2L1.1 7.8" stroke="#cc2629" stroke-width="2"/></svg>
<svg style="left:1303px;top:686px" width="10" height="10" viewBox="-0.2 -0.8 10 10"><path d="M1.1 1.2L7.9 7.8M7.9 1.2L1.1 7.8" stroke="#cc2629" stroke-width="2"/></svg>
<div class="a" style="left:181px;top:729px;width:1222px;height:1px;background:#dcdcdc"></div>
<svg style="left:192px;top:714px" width="18" height="6" viewBox="-0.5 0 18 6"><circle cx="2.65" cy="3" r="1.55" fill="none" stroke="#2a7ab8" stroke-width="1.25"/><circle cx="8.5" cy="3" r="1.55" fill="none" stroke="#2a7ab8" stroke-width="1.25"/><circle cx="14.35" cy="3" r="1.55" fill="none" stroke="#2a7ab8" stroke-width="1.25"/></svg>
<svg style="left:218px;top:708px" width="18" height="18" viewBox="-0.7 -0.4 18 18"><circle cx="8.3" cy="8.5" r="7.5" fill="none" stroke="#2a7ab8" stroke-width="1.2"/><path d="M7.3 6.7H8.2V10.6Q8.2 11.7 9.6 11.5" fill="none" stroke="#2a7ab8" stroke-width="1.1"/><circle cx="7.9" cy="4.8" r="0.8" fill="#2a7ab8"/></svg>
<span class="t" id="t185" style="left:254.99px;top:708.00px;font-size:13px;font-weight:400;color:#111;letter-spacing:0.345px;">003</span>
<span class="t" id="t186" style="left:334.43px;top:708.00px;font-size:13px;font-weight:400;color:#111;letter-spacing:-0.074px;">Dodavatel - školení 4</span>
<span class="t" id="t187" style="left:538.81px;top:708.00px;font-size:13px;font-weight:400;color:#111;letter-spacing:0.174px;">12345678</span>
<span class="t" id="t188" style="left:639.15px;top:708.00px;font-size:13px;font-weight:400;color:#111;letter-spacing:-0.023px;">24. 5. 2025 20:36</span>
<span class="t" id="t189" style="left:788.73px;top:708.00px;font-size:13px;font-weight:400;color:#111;letter-spacing:-0.018px;">Podána po lhůtě</span>
<svg style="left:996px;top:711px" width="12" height="10" viewBox="-0.3 -0.8 12 10"><path d="M0.9 4.6L4.2 7.6L10 1" fill="none" stroke="#2db32f" stroke-width="2"/></svg>
<svg style="left:1137px;top:711px" width="10" height="10" viewBox="-0.1 -0.8 10 10"><path d="M1.1 1.2L7.9 7.8M7.9 1.2L1.1 7.8" stroke="#cc2629" stroke-width="2"/></svg>
<svg style="left:1303px;top:711px" width="10" height="10" viewBox="-0.2 -0.8 10 10"><path d="M1.1 1.2L7.9 7.8M7.9 1.2L1.1 7.8" stroke="#cc2629" stroke-width="2"/></svg>
<div class="a" style="left:181px;top:754px;width:1222px;height:1px;background:#dcdcdc"></div>
<svg style="left:192px;top:739px" width="18" height="6" viewBox="-0.5 0 18 6"><circle cx="2.65" cy="3" r="1.55" fill="none" stroke="#2a7ab8" stroke-width="1.25"/><circle cx="8.5" cy="3" r="1.55" fill="none" stroke="#2a7ab8" stroke-width="1.25"/><circle cx="14.35" cy="3" r="1.55" fill="none" stroke="#2a7ab8" stroke-width="1.25"/></svg>
<svg style="left:218px;top:733px" width="18" height="18" viewBox="-0.7 -0.4 18 18"><circle cx="8.3" cy="8.5" r="7.5" fill="none" stroke="#2a7ab8" stroke-width="1.2"/><path d="M7.3 6.7H8.2V10.6Q8.2 11.7 9.6 11.5" fill="none" stroke="#2a7ab8" stroke-width="1.1"/><circle cx="7.9" cy="4.8" r="0.8" fill="#2a7ab8"/></svg>
<span class="t" id="t196" style="left:254.99px;top:733.00px;font-size:13px;font-weight:400;color:#111;letter-spacing:0.386px;">002</span>
<span class="t" id="t197" style="left:334.43px;top:733.00px;font-size:13px;font-weight:400;color:#111;letter-spacing:-0.064px;">Dodavatel - školení 3</span>
<span class="t" id="t198" style="left:538.81px;top:733.00px;font-size:13px;font-weight:400;color:#111;letter-spacing:0.174px;">12345678</span>
<span class="t" id="t199" style="left:639.15px;top:733.00px;font-size:13px;font-weight:400;color:#111;letter-spacing:-0.023px;">24. 5. 2025 20:13</span>
<span class="t" id="t200" style="left:788.73px;top:733.00px;font-size:13px;font-weight:400;color:#111;letter-spacing:-0.071px;">Podána</span>
<svg style="left:997px;top:736px" width="9" height="10" viewBox="0 -0.8 9 10"><path d="M1.1 1.2L7.9 7.8M7.9 1.2L1.1 7.8" stroke="#cc2629" stroke-width="2"/></svg>
<svg style="left:1137px;top:736px" width="10" height="10" viewBox="-0.1 -0.8 10 10"><path d="M1.1 1.2L7.9 7.8M7.9 1.2L1.1 7.8" stroke="#cc2629" stroke-width="2"/></svg>
<svg style="left:1303px;top:736px" width="10" height="10" viewBox="-0.2 -0.8 10 10"><path d="M1.1 1.2L7.9 7.8M7.9 1.2L1.1 7.8" stroke="#cc2629" stroke-width="2"/></svg>
<svg style="left:192px;top:764px" width="18" height="6" viewBox="-0.5 0 18 6"><circle cx="2.65" cy="3" r="1.55" fill="none" stroke="#2a7ab8" stroke-width="1.25"/><circle cx="8.5" cy="3" r="1.55" fill="none" stroke="#2a7ab8" stroke-width="1.25"/><circle cx="14.35" cy="3" r="1.55" fill="none" stroke="#2a7ab8" stroke-width="1.25"/></svg>
<svg style="left:218px;top:758px" width="18" height="18" viewBox="-0.7 -0.4 18 18"><circle cx="8.3" cy="8.5" r="7.5" fill="none" stroke="#2a7ab8" stroke-width="1.2"/><path d="M7.3 6.7H8.2V10.6Q8.2 11.7 9.6 11.5" fill="none" stroke="#2a7ab8" stroke-width="1.1"/><circle cx="7.9" cy="4.8" r="0.8" fill="#2a7ab8"/></svg>
<span class="t" id="t206" style="left:254.99px;top:758.00px;font-size:13px;font-weight:400;color:#111;letter-spacing:0.376px;">001</span>
<span class="t" id="t207" style="left:334.43px;top:758.00px;font-size:13px;font-weight:400;color:#111;letter-spacing:-0.060px;">Dodavatel - školení 2</span>
<span class="t" id="t208" style="left:538.81px;top:758.00px;font-size:13px;font-weight:400;color:#111;letter-spacing:0.174px;">12345678</span>
<span class="t" id="t209" style="left:639.15px;top:758.00px;font-size:13px;font-weight:400;color:#111;letter-spacing:-0.020px;">24. 5. 2025 20:11</span>
<span class="t" id="t210" style="left:788.73px;top:758.00px;font-size:13px;font-weight:400;color:#111;letter-spacing:-0.071px;">Podána</span>
<svg style="left:997px;top:761px" width="9" height="10" viewBox="0 -0.8 9 10"><path d="M1.1 1.2L7.9 7.8M7.9 1.2L1.1 7.8" stroke="#cc2629" stroke-width="2"/></svg>
<svg style="left:1137px;top:761px" width="10" height="10" viewBox="-0.1 -0.8 10 10"><path d="M1.1 1.2L7.9 7.8M7.9 1.2L1.1 7.8" stroke="#cc2629" stroke-width="2"/></svg>
<svg style="left:1303px;top:761px" width="10" height="10" viewBox="-0.2 -0.8 10 10"><path d="M1.1 1.2L7.9 7.8M7.9 1.2L1.1 7.8" stroke="#cc2629" stroke-width="2"/></svg>
<div class="a" style="left:190px;top:655px;width:256.5px;height:194px;background:#fff;border-radius:9px;box-shadow:0 0 0 .6px rgba(0,0,0,.22),0 2px 9px rgba(0,0,0,.3)"></div>
<span class="t" id="t215" style="left:205.93px;top:670.00px;font-size:13px;font-weight:400;color:#a9a9b0;letter-spacing:-0.095px;">Dešifrovat</span>
<div class="a" style="left:190px;top:697px;width:254.5px;height:33px;border:1px solid #e8141f"></div>
<span class="t" id="t217" style="left:206.13px;top:702.00px;font-size:12.5px;font-weight:700;color:#000;letter-spacing:-0.238px;">Zaevidovat zpětvzetí</span>
<span class="t" id="t218" style="left:206.32px;top:734.00px;font-size:12.5px;font-weight:700;color:#000;transform:scaleX(0.9477);transform-origin:0 0;-webkit-text-stroke:.25px #000;">Označení nabídky jako nepodaná</span>
<span class="t" id="t219" style="left:206.41px;top:766.00px;font-size:12.5px;font-weight:700;color:#000;transform:scaleX(0.9489);transform-origin:0 0;-webkit-text-stroke:.25px #000;">Vyloučení dodavatele</span>
<div class="a" style="left:190px;top:800px;width:256.5px;height:1px;background:#e0e0e0"></div>
<span class="t" id="t221" style="left:206.29px;top:816.00px;font-size:12.5px;font-weight:700;color:#000;letter-spacing:-0.229px;">Otevřít samostatně</span>
</body></html>
